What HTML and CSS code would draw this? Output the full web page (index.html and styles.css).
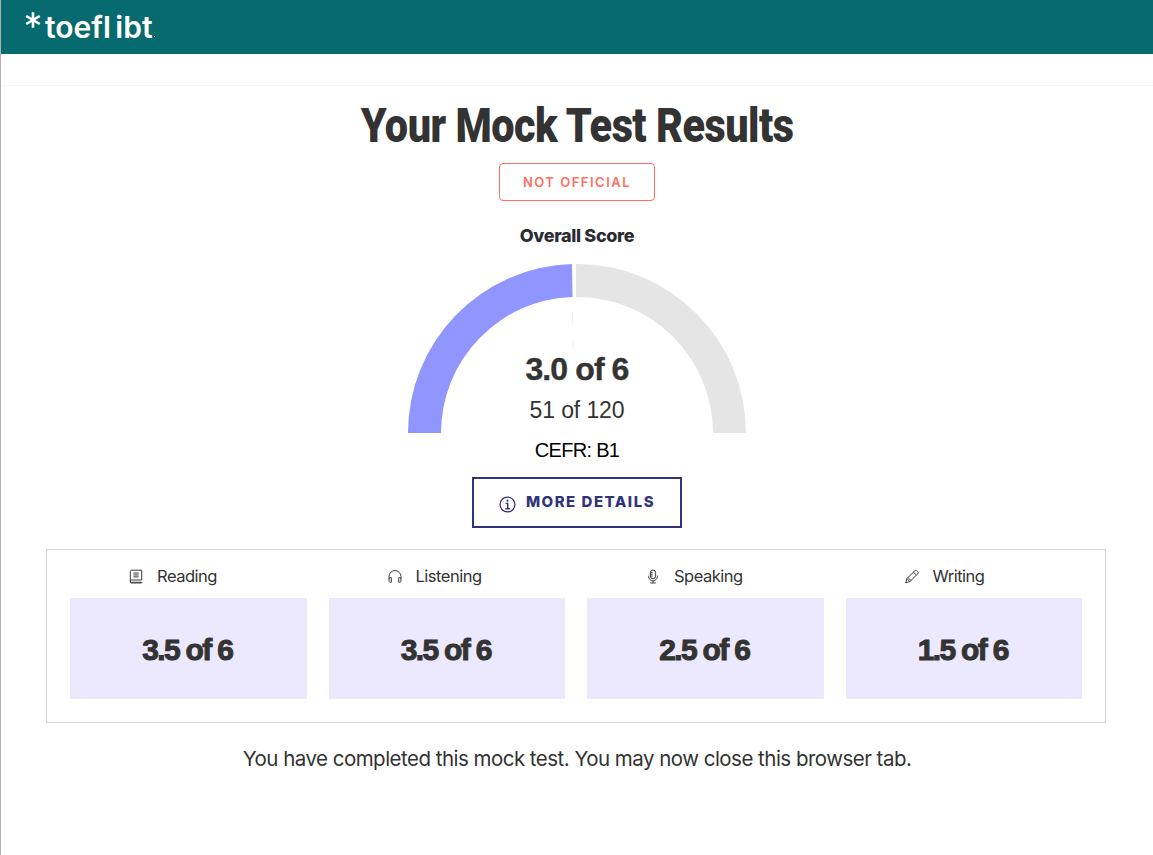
FILE: index.html
```html
<!DOCTYPE html>
<html lang="en">
<head>
<meta charset="utf-8">
<title>Your Mock Test Results</title>
<link rel="stylesheet" href="styles.css">
</head>
<body>
<header class="topbar">
  <div class="logo">
    <svg class="logo-star" viewBox="0 0 16 16" aria-hidden="true">
      <g stroke="#fff" stroke-width="2.6" stroke-linecap="butt">
        <path d="M8 0.3V15.7M1.2 4L14.8 12M1.2 12L14.8 4"/>
      </g>
    </svg>
    <span class="logo-text">toefl ibt</span>
    <span class="logo-mark"></span>
  </div>
</header>
<div class="subbar"></div>
<main class="results">
  <h1 class="title">Your Mock Test Results</h1>
  <div class="badge">NOT OFFICIAL</div>
  <h2 class="overall">Overall Score</h2>
  <div class="gauge">
    <svg class="gauge-arc" width="338" height="169" viewBox="0 0 338 169" aria-hidden="true">
      <path fill="#e5e5e5" d="M168 0A169 169 0 0 1 338 169H305A136 136 0 0 0 168 33Z"/>
      <path fill="#9196ff" d="M164 0A169 169 0 0 0 0 169H33A136 136 0 0 1 164.5 33Z"/>
      <path stroke="#eeeeff" stroke-width="1" d="M164.5 48V61M165 76V86"/>
    </svg>
    <div class="gauge-score">3.0 of 6</div>
    <div class="gauge-points">51 of 120</div>
  </div>
  <div class="cefr">CEFR: B1</div>
  <button class="details" type="button">
    <svg class="info-icon" width="17" height="17" viewBox="0 0 16 16" aria-hidden="true">
      <circle cx="8" cy="8" r="7" fill="none" stroke="#33337a" stroke-width="1.2"/>
      <circle cx="8" cy="4.4" r="1" fill="#33337a"/>
      <path fill="none" stroke="#33337a" stroke-width="1.3" d="M6.2 6.9H8.2V11.9M6 12H10.2"/>
    </svg>
    <span>MORE DETAILS</span>
  </button>
  <section class="sections">
    <div class="section">
      <div class="section-label">
        <svg class="section-icon" viewBox="0 0 16 16" aria-hidden="true">
          <path d="M1.5 13V2.2C1.5 1.3 2 0.8 3 0.8H14.5V12H3C2 12 1.5 12.4 1.5 13.2C1.5 14.2 2 14.6 3 14.6H14.5V15.4H3C2 15.4 1.5 14.8 1.5 13.8Z"/>
          <path d="M5 4H11M5 6.2H11M5 8.4H11"/>
        </svg>
        <span>Reading</span>
      </div>
      <div class="section-score">3.5 of 6</div>
    </div>
    <div class="section">
      <div class="section-label">
        <svg class="section-icon" viewBox="0 0 16 16" aria-hidden="true">
          <path d="M1.2 11V8A6.8 6.8 0 0 1 14.8 8V11"/>
          <path d="M1.2 10.5C1.2 9.6 1.9 9.2 3.8 9.2V14.6C1.9 14.6 1.2 14.2 1.2 13.2ZM14.8 10.5C14.8 9.6 14.1 9.2 12.2 9.2V14.6C14.1 14.6 14.8 14.2 14.8 13.2Z"/>
        </svg>
        <span>Listening</span>
      </div>
      <div class="section-score">3.5 of 6</div>
    </div>
    <div class="section">
      <div class="section-label">
        <svg class="section-icon" viewBox="0 0 16 16" aria-hidden="true">
          <rect x="5" y="0.6" width="6" height="10" rx="3"/>
          <path d="M3 7V8A5 5 0 0 0 13 8V7M8 13V15.2M4.8 15.4H11.2"/>
          <path d="M5 3.5H7.5M5 5.5H7.5M5 7.5H7.5"/>
        </svg>
        <span>Speaking</span>
      </div>
      <div class="section-score">2.5 of 6</div>
    </div>
    <div class="section">
      <div class="section-label">
        <svg class="section-icon" viewBox="0 0 16 16" aria-hidden="true">
          <path d="M0.8 15.2L2.2 10.4L11 1.6C11.8 0.8 13 0.8 13.9 1.7L14.4 2.2C15.2 3 15.2 4.2 14.4 5L5.6 13.8Z"/>
          <path d="M9.6 3L13 6.4M2.2 10.4L5.6 13.8M3.4 9.2L6.8 12.6"/>
        </svg>
        <span>Writing</span>
      </div>
      <div class="section-score">1.5 of 6</div>
    </div>
  </section>
  <p class="closing">You have completed this mock test. You may now close this browser tab.</p>
</main>
</body>
</html>
```
FILE: styles.css
```css
* { box-sizing: border-box; }
html, body { margin: 0; padding: 0; }
body {
  min-height: 855px;
  background: #fff;
  border-left: 1px solid #b3b3b3;
  color: #333;
  font-family: "Liberation Sans", Arial, sans-serif;
  overflow: hidden;
}
.topbar {
  height: 54px;
  background: #076a6e;
  padding: 11px 0 0 24px;
}
.logo { display: flex; align-items: flex-start; color: #fff; }
.logo-star { width: 16px; height: 16px; margin-top: 1px; }
.logo-text {
  margin-left: 4px;
  font-family: Inter, sans-serif;
  font-weight: 600;
  font-size: 30px;
  line-height: 32px;
  word-spacing: -3px;
  letter-spacing: 0;
}
.logo-mark {
  width: 1px;
  height: 1px;
  margin: 25px 0 0 1px;
  background: #cfe3e3;
}
.subbar { height: 32px; border-bottom: 1px solid #f5f5f5; }
.results { display: flex; flex-direction: column; align-items: center; }
.title {
  margin: 14px 0 0;
  font-family: Roboto, "Liberation Sans", sans-serif;
  font-weight: 900;
  font-size: 49px;
  line-height: 52px;
  letter-spacing: -0.6px;
  white-space: nowrap;
  color: #333;
  transform: scaleX(0.845);
}
.badge {
  margin-top: 11px;
  width: 156px;
  height: 38px;
  padding-bottom: 1px;
  border: 1px solid #ff6f61;
  border-radius: 4px;
  color: #ff6f61;
  font-family: Inter, sans-serif;
  font-size: 13px;
  font-weight: 600;
  letter-spacing: 1.5px;
  display: flex;
  align-items: center;
  justify-content: center;
}
.overall {
  margin: 24px 0 0;
  font-family: Inter, sans-serif;
  font-size: 18px;
  font-weight: 800;
  line-height: 22px;
  letter-spacing: -0.35px;
  color: #2b2b33;
}
.gauge {
  position: relative;
  margin-top: 17px;
  width: 338px;
  height: 169px;
  display: flex;
  flex-direction: column;
  align-items: center;
}
.gauge-arc { position: absolute; left: 0; top: 0; }
.gauge-score {
  margin-top: 85px;
  font-size: 32px;
  font-weight: 700;
  line-height: 40px;
  letter-spacing: -0.9px;
  color: #333;
  -webkit-text-stroke: 0.4px #333;
}
.gauge-points {
  margin-top: 6px;
  font-size: 23px;
  line-height: 30px;
  letter-spacing: -0.1px;
  color: #333;
}
.cefr {
  margin-top: 4px;
  font-size: 20px;
  line-height: 26px;
  letter-spacing: -0.7px;
  color: #000;
}
.details {
  margin-top: 14px;
  width: 210px;
  height: 51px;
  background: #fff;
  border: 2px solid #33337a;
  color: #33337a;
  font-family: Inter, sans-serif;
  font-size: 15px;
  font-weight: 800;
  letter-spacing: 1.5px;
  display: flex;
  align-items: center;
  justify-content: center;
  gap: 10px;
  padding: 0 0 2px;
}
.info-icon { margin-top: 5px; }
.sections {
  margin-top: 21px;
  width: 1060px;
  height: 174px;
  border: 1px solid #d6d6d6;
  padding: 16px 23px 23px;
  display: grid;
  grid-template-columns: repeat(4, 1fr);
  column-gap: 22px;
  margin-left: -2px;
}
.section { display: flex; flex-direction: column; }
.section-label {
  height: 20px;
  display: flex;
  align-items: center;
  gap: 14px;
  padding-left: 59px;
  font-family: Inter, sans-serif;
  font-size: 16.5px;
  letter-spacing: -0.5px;
  color: #333;
}
.section-icon {
  width: 14px;
  height: 15px;
  fill: none;
  stroke: #333;
  stroke-width: 1.1;
}
.section-score {
  margin-top: 12px;
  height: 101px;
  padding: 2px 2px 0 0;
  background: #ece8fd;
  display: flex;
  align-items: center;
  justify-content: center;
  font-size: 30px;
  font-weight: 700;
  letter-spacing: -1.7px;
  color: #333;
  -webkit-text-stroke: 1px #333;
}
.closing {
  margin: 23px 0 0;
  font-family: Inter, sans-serif;
  font-size: 20.5px;
  line-height: 26px;
  letter-spacing: -0.52px;
  color: #333;
}
```
